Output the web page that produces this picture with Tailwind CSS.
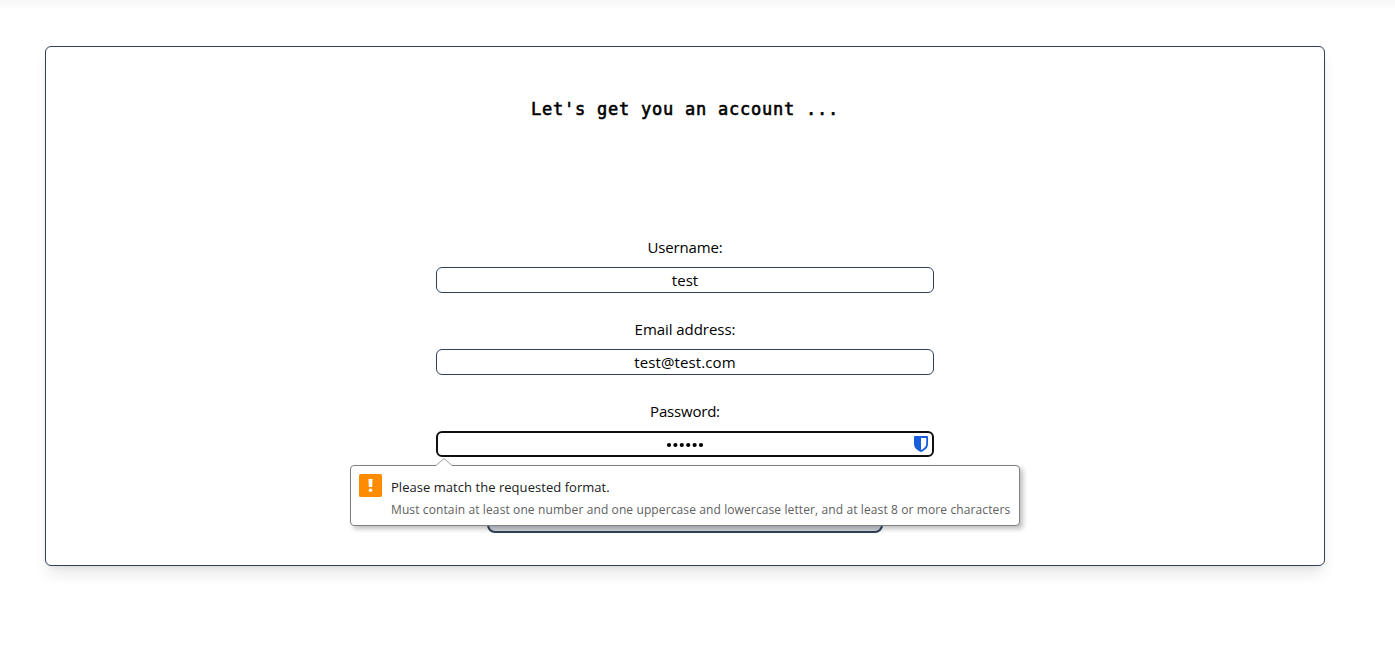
<!DOCTYPE html>
<html lang="en">
<head>
<meta charset="utf-8">
<title>Create account</title>
<script src="https://cdn.jsdelivr.net/npm/@tailwindcss/browser@4"></script>
</head>
<body class="h-[645px] overflow-hidden bg-white font-['Open_Sans','Noto_Sans',sans-serif] text-black">
<header class="h-[10px] bg-linear-to-b from-[#f7f7f7] to-white"></header>
<main class="pt-[36px] pl-[45px]">
  <section class="flex h-[520px] w-[1280px] flex-col items-center rounded-md border border-slate-700 bg-white shadow-lg">
    <h1 class="mt-[48px] h-7 whitespace-pre font-['DejaVu_Sans_Mono',monospace] text-[17px] leading-7 font-normal tracking-[0.77px] [-webkit-text-stroke:0.6px_#000]">Let's get you an account ...</h1>
    <form class="mt-[112px] flex w-[498px] flex-col items-center text-[15px]">
      <label class="h-6 leading-6 tracking-[-0.15px]">Username:</label>
      <div class="mt-[8px] h-[26px] w-full rounded-md border border-slate-700 text-center leading-[25px]">test</div>
      <label class="mt-[24px] h-6 leading-6 tracking-[-0.05px]">Email address:</label>
      <div class="mt-[8px] h-[26px] w-full rounded-md border border-slate-700 text-center leading-[25px] tracking-[0.1px]">test@test.com</div>
      <label class="mt-[24px] h-6 leading-6 tracking-[-0.2px]">Password:</label>
      <div class="relative mt-[8px] flex h-[26px] w-full items-center justify-center rounded-md border-2 border-[#101010]">
        <svg class="mt-px h-[6px] w-[38px]" viewBox="0 0 38 6"><g fill="#000"><circle cx="3" cy="3" r="2.100"/><circle cx="9.400" cy="3" r="2.100"/><circle cx="15.800" cy="3" r="2.100"/><circle cx="22.200" cy="3" r="2.100"/><circle cx="28.600" cy="3" r="2.100"/><circle cx="35" cy="3" r="2.100"/></g></svg>
        <svg class="absolute top-[3px] left-[476px] h-4 w-[14px]" viewBox="0 0 14 16"><path fill="#175ddc" d="M.8 0H13.200Q14 0 14 .8V8C14 12 10.500 14.500 7 16C3.500 14.500 0 12 0 8V.8Q0 0 .8 0Z"/><path fill="#fff" d="M7 2H12.200V8C12.200 10.800 9.500 12.700 7 14Z"/></svg>
        <div class="absolute top-[32px] left-[-88px] h-[61px] w-[670px] rounded border border-[#808080] bg-white shadow-[3px_3px_5px_rgba(0,0,0,0.25)]">
          <svg class="absolute -top-[8px] left-[85px] h-[9px] w-[16px]" viewBox="0 0 16 9"><path d="M0 9L0 7.500L8 0L16 7.500V9Z" fill="#fff"/><path d="M0 7.500L8 .5L16 7.500" fill="none" stroke="#a0a0a0"/></svg>
          <div class="flex pt-2 pl-2">
            <svg class="h-[23px] w-[23px]" viewBox="0 0 23 23"><rect width="23" height="23" rx="1.500" fill="#ff8c00"/><path fill="#fff" d="M9.500 5H13.500L13.200 13H9.800Z"/><circle cx="11.500" cy="16.300" r="1.800" fill="#fff"/></svg>
            <div class="ml-[9px] whitespace-nowrap">
              <p class="mt-[2px] h-[23px] text-[13px] leading-[22px] tracking-[0.04px] text-[#202020]">Please match the requested format.</p>
              <p class="h-[22px] text-xs leading-[22px] tracking-[0.11px] text-[#606060]">Must contain at least one number and one uppercase and lowercase letter, and at least 8 or more characters</p>
            </div>
          </div>
        </div>
      </div>
      <div class="mt-[43px] h-[33px] w-[396px] rounded-lg border-2 border-slate-700 bg-gray-300"></div>
    </form>
  </section>
</main>
</body>
</html>
